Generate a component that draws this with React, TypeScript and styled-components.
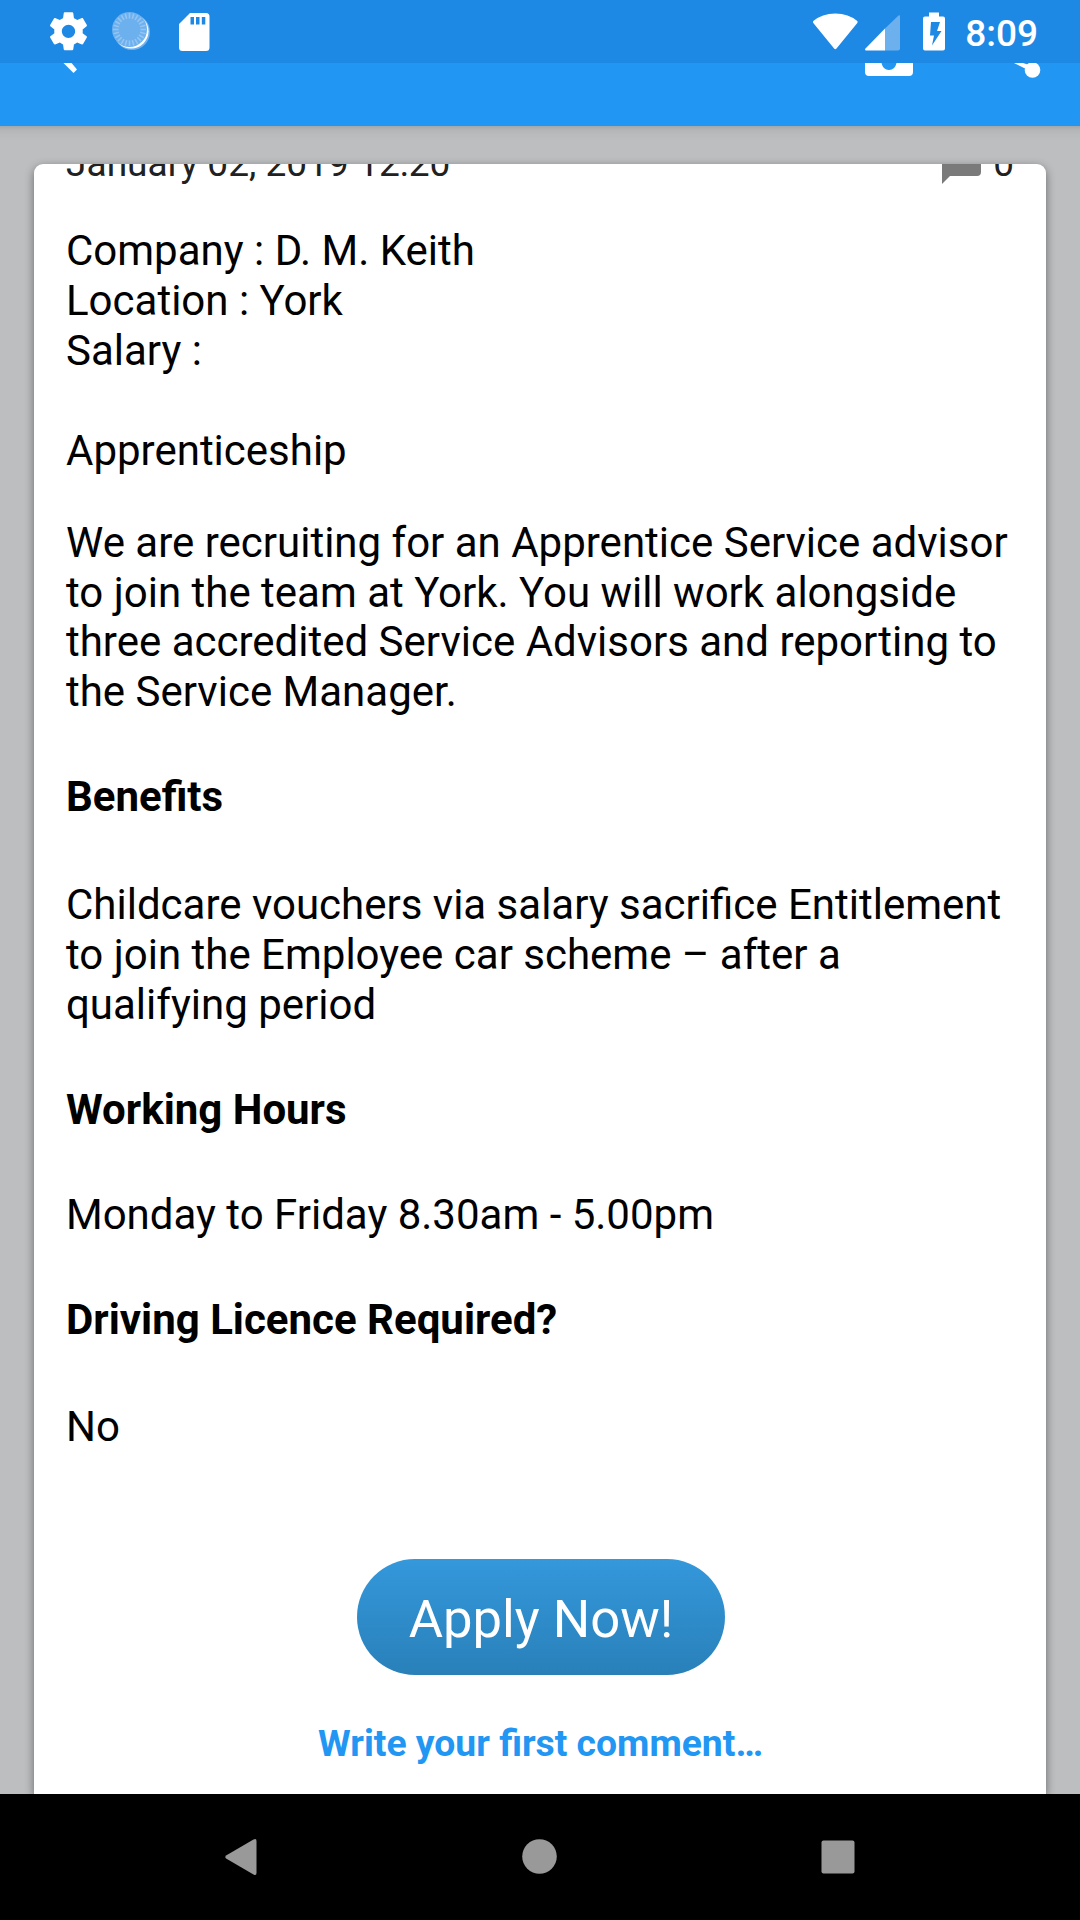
import React from "react";
import styled, { createGlobalStyle } from "styled-components";

const GlobalStyle = createGlobalStyle`
  *, *::before, *::after { box-sizing: border-box; }
  html, body { margin: 0; padding: 0; background: #bdbec0; }
  body { font-family: Roboto, "Noto Sans", sans-serif; color: #000; }
  svg { display: block; flex: none; }
`;

const Screen = styled.div`
  width: 1080px;
  height: 1920px;
  display: flex;
  flex-direction: column;
  overflow: hidden;
  background: #bdbec0;
`;

const StatusBar = styled.header`
  height: 63px;
  flex: none;
  display: flex;
  align-items: center;
  justify-content: space-between;
  padding: 0 42px 0 47px;
  background: #1e88e5;
`;

const IconGroup = styled.div`
  display: flex;
  align-items: center;
`;

const Clock = styled.time`
  margin-left: 18px;
  color: #fff;
  font-size: 37px;
  font-weight: 500;
  line-height: 44px;
  padding-top: 4px;
`;

const Toolbar = styled.nav`
  height: 63px;
  flex: none;
  display: flex;
  align-items: flex-start;
  justify-content: space-between;
  padding: 0 31px 0 36px;
  overflow: hidden;
  background: #2196f3;
`;

const ToolbarButton = styled.button`
  display: block;
  border: 0;
  padding: 0;
  margin: 0;
  background: none;
`;

const Content = styled.main`
  flex: 1;
  min-height: 0;
  padding: 38px 34px 0;
  overflow: hidden;
  background: linear-gradient(#a6a7a9, #b4b5b7 4px, #babbbd 9px, #bdbec0 16px);
`;

const Card = styled.article`
  height: 100%;
  border-radius: 9px 9px 0 0;
  background: #fff;
  box-shadow: 0 3px 10px rgba(0, 0, 0, 0.45);
  overflow: hidden;
`;

const Scrolled = styled.div`
  margin-top: -22px;
  padding: 0 32px;
  display: flex;
  flex-direction: column;
`;

const Meta = styled.div`
  display: flex;
  justify-content: space-between;
  height: 42px;
  font-size: 37.1px;
  line-height: 44px;
  color: #212121;
`;

const Comments = styled.span`
  display: flex;
  align-items: flex-start;
  gap: 11px;
`;

const Line = styled.p<{ $gap?: number; $bold?: boolean; $leading?: number }>`
  margin: ${(p) => p.$gap ?? 0}px 0 0;
  font-size: 42px;
  line-height: ${(p) => p.$leading ?? 50}px;
  font-weight: ${(p) => (p.$bold ? 700 : 400)};
  white-space: nowrap;
`;

const ApplyButton = styled.button`
  align-self: center;
  width: 368px;
  height: 116px;
  margin: 107px 0 0 2px;
  border: 0;
  border-radius: 58px;
  padding: 1px 0 0;
  background: linear-gradient(#3498db, #2980b9);
  color: #fff;
  font: 400 52.6px/118px Roboto, sans-serif;
`;

const CommentLink = styled.a`
  align-self: center;
  margin: 46px 0 0 1px;
  color: #2196f3;
  font-size: 37.3px;
  line-height: 44px;
  font-weight: 700;
  white-space: nowrap;
`;

const NavBar = styled.footer`
  height: 126px;
  flex: none;
  display: flex;
  align-items: center;
  justify-content: space-between;
  padding: 0 223px 0 224px;
  background: #000;
`;

const ticks = Array.from({ length: 24 }, (_, i) => i * 15);

export default function App() {
  return (
    <>
      <GlobalStyle />
      <Screen>
        <StatusBar>
          <IconGroup>
            <svg width="43" height="44" viewBox="0 0 43 44">
              <g transform="translate(-1.300 -1.500) scale(1.900 1.900)">
                <path
                  fill="#fff"
                  d="M19.43 12.98c.04-.32.07-.64.07-.98s-.03-.66-.07-.98l2.11-1.65c.19-.15.24-.42.12-.64l-2-3.46c-.12-.22-.39-.3-.61-.22l-2.49 1c-.52-.4-1.08-.73-1.69-.98l-.38-2.65C14.46 2.18 14.25 2 14 2h-4c-.25 0-.46.18-.49.42l-.38 2.65c-.61.25-1.17.59-1.69.98l-2.49-1c-.23-.09-.49 0-.61.22l-2 3.46c-.13.22-.07.49.12.64l2.11 1.65c-.04.32-.07.65-.07.98s.03.66.07.98l-2.11 1.65c-.19.15-.24.42-.12.64l2 3.46c.12.22.39.3.61.22l2.49-1c.52.4 1.08.73 1.69.98l.38 2.65c.03.24.24.42.49.42h4c.25 0 .46-.18.49-.42l.38-2.65c.61-.25 1.17-.59 1.69-.98l2.49 1c.23.09.49 0 .61-.22l2-3.46c.12-.22.07-.49-.12-.64l-2.11-1.65zM12 15.5c-1.93 0-3.500-1.57-3.500-3.500s1.57-3.500 3.500-3.500 3.500 1.57 3.500 3.500-1.57 3.500-3.500 3.500z"
                />
              </g>
            </svg>
            <svg width="62" height="44" viewBox="0 0 62 44">
              <circle cx="42" cy="22" r="18" fill="#6fb2ee" />
              <circle cx="41.2" cy="21.2" r="17.3" fill="#fff" />
              <circle cx="39.5" cy="19.5" r="17.500" fill="#6cb0ee" />
              <g stroke="#93c5f3" strokeWidth="1.600">
                {ticks.map((a) => (
                  <line key={a} x1="39.5" y1="3" x2="39.5" y2="8.500" transform={`rotate(${a} 39.5 19.5)`} />
                ))}
              </g>
            </svg>
            <svg width="60" height="44" viewBox="0 0 60 44">
              <path fill="#fff" fillRule="evenodd" d="M38 3h16a3.500 3.500 0 0 1 3.500 3.500v31a3.500 3.500 0 0 1-3.500 3.500H30.500a3.500 3.500 0 0 1-3.500-3.500V14zM38.500 7v7.500H42V7zM44 7v7.500h3.500V7zM49.800 7v7.500h3.500V7z" />
            </svg>
          </IconGroup>
          <IconGroup>
            <svg width="135" height="44" viewBox="0 0 135 44" fill="#fff">
              <path d="M1.300 11Q10 3.400 23.300 3.400T45.300 11Q46 12 45.300 13L24.500 38.500Q23.300 40 22.100 38.500L1.300 13Q.6 12 1.300 11z" />
              <path fill="#6cb0ee" d="M73 18.500 86.500 5.500q1.500-1 1.500 1v32q0 2-2 2H73z" />
              <path d="M73 18.500V40.500H55q-3 0-1.500-2z" />
              <path fillRule="evenodd" d="M117 2.500h10V6.500h4q2 0 2 2v30q0 2-2 2h-18q-2 0-2-2V8.500q0-2 2-2h4zM119 12l-1 13.500h4l-2 10 9.500-14.500h-4.500L128 12z" />
            </svg>
            <Clock>8:09</Clock>
          </IconGroup>
        </StatusBar>
        <Toolbar>
          <ToolbarButton aria-label="Back">
            <svg width="50" height="14" viewBox="0 0 50 14">
              <path d="M27.500 0h8l5.500 6.500-3.500 3.500z" fill="#fff" />
            </svg>
          </ToolbarButton>
          <ToolbarButton aria-label="Photo and share">
            <svg width="184" height="18" viewBox="0 0 184 18" fill="#fff">
              <path d="M0 0h16.500q1.500 7 7.500 7t7.500-7H48v9q0 4-4 4H4q-4 0-4-4z" />
              <path d="M149 0h9l6 2-3 4z" />
              <circle cx="167.500" cy="7" r="7.800" />
            </svg>
          </ToolbarButton>
        </Toolbar>
        <Content>
          <Card>
            <Scrolled>
              <Meta>
                <span>January 02, 2019 12:20</span>
                <Comments>
                  <svg width="41" height="42" viewBox="0 0 41 42">
                    <path d="M1 2h39v28q0 4-4 4H9l-8 8z" fill="#7a7a7a" />
                  </svg>
                  <span>0</span>
                </Comments>
              </Meta>
              <Line $gap={42}>Company : D. M. Keith</Line>
              <Line>Location : York</Line>
              <Line>Salary :</Line>
              <Line $gap={50}>Apprenticeship</Line>
              <Line $gap={42} $leading={49.6}>
                We are recruiting for an Apprentice Service advisor
                <br />
                to join the team at York. You will work alongside
                <br />
                three accredited Service Advisors and reporting to
                <br />
                the Service Manager.
              </Line>
              <Line $gap={55.6} $bold>Benefits</Line>
              <Line $gap={58}>
                Childcare vouchers via salary sacrifice Entitlement
                <br />
                to join the Employee car scheme – after a
                <br />
                qualifying period
              </Line>
              <Line $gap={55} $bold>Working Hours</Line>
              <Line $gap={55}>Monday to Friday 8.30am - 5.00pm</Line>
              <Line $gap={55} $bold>Driving Licence Required?</Line>
              <Line $gap={57}>No</Line>
              <ApplyButton>Apply Now!</ApplyButton>
              <CommentLink>Write your first comment…</CommentLink>
            </Scrolled>
          </Card>
        </Content>
        <NavBar>
          <svg width="34" height="38" viewBox="0 0 34 38">
            <path d="M2.500 17.200 29.500 1.500Q32.500 0 32.500 3v32q0 3-3 1.500L2.500 20.800Q0 19 2.500 17.200z" fill="#999" />
          </svg>
          <svg width="36" height="38" viewBox="0 0 36 38">
            <circle cx="17.500" cy="18.500" r="17.300" fill="#999" />
          </svg>
          <svg width="36" height="38" viewBox="0 0 36 38">
            <rect x="0.500" y="2.500" width="33" height="33" rx="2" fill="#999" />
          </svg>
        </NavBar>
      </Screen>
    </>
  );
}
